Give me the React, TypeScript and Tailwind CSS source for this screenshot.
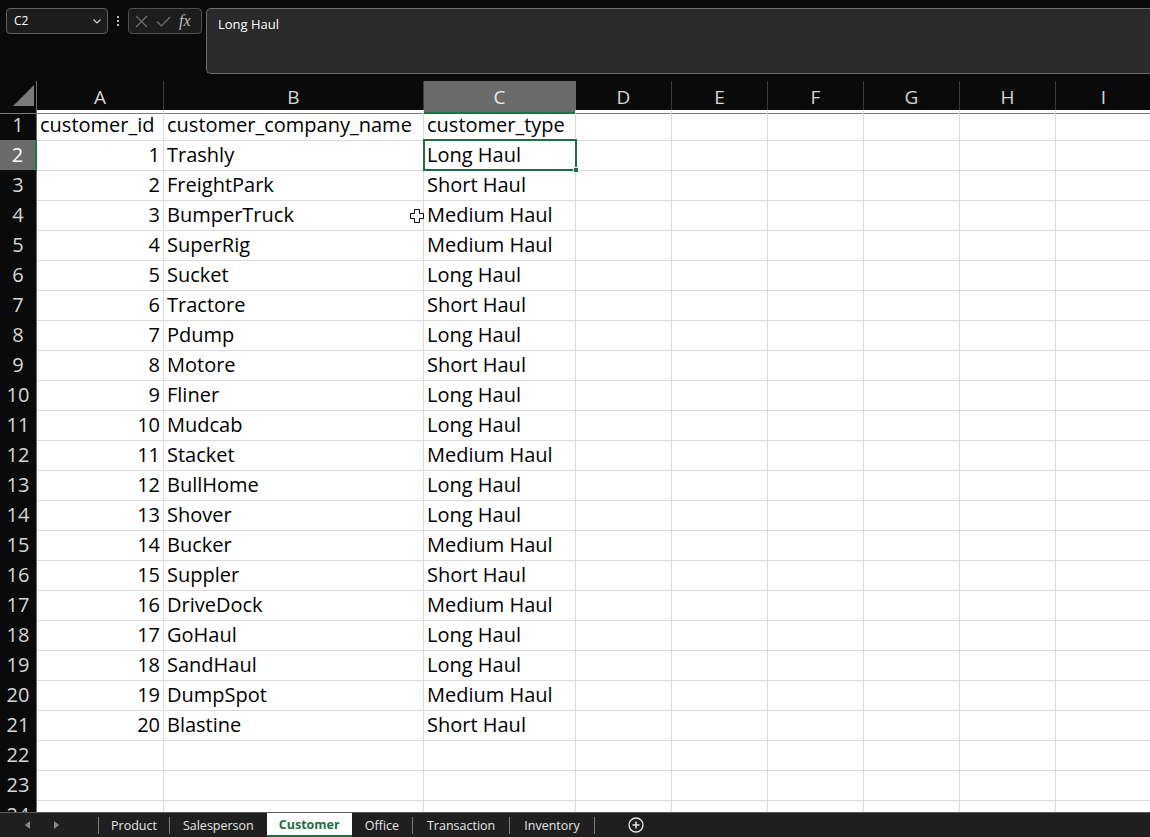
import React from "react";

const rows: [string, string, string][] = [
  ["customer_id", "customer_company_name", "customer_type"],
  ["1", "Trashly", "Long Haul"],
  ["2", "FreightPark", "Short Haul"],
  ["3", "BumperTruck", "Medium Haul"],
  ["4", "SuperRig", "Medium Haul"],
  ["5", "Sucket", "Long Haul"],
  ["6", "Tractore", "Short Haul"],
  ["7", "Pdump", "Long Haul"],
  ["8", "Motore", "Short Haul"],
  ["9", "Fliner", "Long Haul"],
  ["10", "Mudcab", "Long Haul"],
  ["11", "Stacket", "Medium Haul"],
  ["12", "BullHome", "Long Haul"],
  ["13", "Shover", "Long Haul"],
  ["14", "Bucker", "Medium Haul"],
  ["15", "Suppler", "Short Haul"],
  ["16", "DriveDock", "Medium Haul"],
  ["17", "GoHaul", "Long Haul"],
  ["18", "SandHaul", "Long Haul"],
  ["19", "DumpSpot", "Medium Haul"],
  ["20", "Blastine", "Short Haul"],
  ["", "", ""],
  ["", "", ""],
  ["", "", ""],
];

const cols = ["A", "B", "C", "D", "E", "F", "G", "H", "I"];
const gridCols = "grid grid-cols-[37px_127px_260px_152px_96px_96px_96px_96px_96px_96px]";

export default function App() {
  return (
    <div className="w-[1150px] h-[837px] overflow-hidden bg-[#0a0a0a] flex flex-col" style={{ fontFamily: '"Open Sans", sans-serif' }}>
      {/* top formula area */}
      <div className="h-[81px] shrink-0 flex items-start pt-[8px] pl-[6px]">
        <div className="w-[102px] h-[26px] rounded-[4px] border border-[#5e5e5e] bg-[#1c1c1c] flex items-center justify-between pl-[7px] pr-[4px]">
          <span className="text-[12px] text-white">C2</span>
          <svg width="12" height="12" viewBox="0 0 12 12"><path d="M2.5 4.5 L6 8 L9.5 4.5" stroke="#d0d0d0" strokeWidth="1.2" fill="none" /></svg>
        </div>
        <div className="w-[20px] h-[26px] flex flex-col items-center justify-center gap-[2px]">
          <div className="w-[2px] h-[2px] bg-[#bdbdbd]" />
          <div className="w-[2px] h-[2px] bg-[#bdbdbd]" />
          <div className="w-[2px] h-[2px] bg-[#bdbdbd]" />
        </div>
        <div className="w-[74px] h-[26px] rounded-[4px] border border-[#4e4e4e] bg-[#1c1c1c] flex items-center pl-[6px] gap-[8px]">
          <svg width="13" height="13" viewBox="0 0 13 13"><path d="M1 1 L12 12 M12 1 L1 12" stroke="#6e6e6e" strokeWidth="1.2" /></svg>
          <svg width="15" height="13" viewBox="0 0 15 13"><path d="M1 6.5 L5.5 11 L14 2" stroke="#6e6e6e" strokeWidth="1.2" fill="none" /></svg>
          <span className="text-[16px] italic text-[#bdbdbd] leading-none" style={{ fontFamily: '"Liberation Serif", serif' }}>fx</span>
        </div>
        <div className="ml-[4px] flex-1 h-[66px] rounded-l-[5px] border border-r-0 border-[#6a6a6a] bg-[#2a2a2a] pl-[11px] pt-[2px]">
          <span className="text-[13px] text-white leading-[18px]">Long Haul</span>
        </div>
      </div>

      {/* grid */}
      <div className="relative h-[731px] overflow-hidden bg-white">
        {/* header row */}
        <div className={`${gridCols} h-[29px] bg-[#0a0a0a]`}>
          <div className="relative border-r border-[#6a6a6a] border-b border-b-[#7a7a7a]">
            <svg className="absolute left-[13px] top-[4px]" width="22" height="22" viewBox="0 0 22 22"><polygon points="21,0 21,21 0,21" fill="#7a7a7a" /></svg>
          </div>
          {cols.map((c) => (
            <div
              key={c}
              className={
                c === "C"
                  ? "bg-[#6b6b6b] border-r border-[#6a6a6a] border-b-2 border-b-[#217346] flex items-center justify-center text-[19px] text-[#e8e8e8] pt-[2px]"
                  : "border-r border-[#3a3a3a] border-b border-b-[#7a7a7a] flex items-center justify-center text-[19px] text-[#d6d6d6]"
              }
            >
              {c}
            </div>
          ))}
          <div className="border-b border-b-[#7a7a7a]" />
        </div>

        {rows.map((r, i) => {
          const n = i + 1;
          const sel = n === 2;
          return (
            <div key={n} className={`${gridCols} h-[30px]`}>
              <div
                className={
                  sel
                    ? "bg-[#6b6b6b] border-r-2 border-[#217346] border-b border-b-[#2a2a2a] flex items-center justify-center text-[20px] text-white"
                    : "bg-[#0a0a0a] border-r border-[#6a6a6a] border-b border-b-[#2a2a2a] flex items-center justify-center text-[20px] text-[#d6d6d6]"
                }
              >
                {n}
              </div>
              <div className={`border-r border-b border-[#dadada] flex items-end pb-[3px] text-[20px] text-black leading-[24px] ${n === 1 ? "justify-start pl-[3px]" : "justify-end pr-[3px]"}`}>
                {r[0]}
              </div>
              <div className="border-r border-b border-[#dadada] flex items-end pb-[3px] pl-[3px] text-[20px] text-black leading-[24px] whitespace-nowrap">
                {r[1]}
              </div>
              <div className="border-r border-b border-[#dadada] flex items-end pb-[3px] pl-[3px] text-[20px] text-black leading-[24px] whitespace-nowrap">
                {r[2]}
              </div>
              {[0, 1, 2, 3, 4, 5].map((k) => (
                <div key={k} className="border-r border-b border-[#dadada]" />
              ))}
            </div>
          );
        })}

        {/* selection box C2 */}
        <div className="absolute left-[423px] top-[58px] w-[154px] h-[32px] border-2 border-[#1e6e42] pointer-events-none" />
        <div className="absolute left-[573px] top-[86px] w-[6px] h-[6px] bg-[#1e6e42] border border-white" />

        {/* cell cursor */}
        <svg className="absolute left-[410px] top-[128px]" width="14" height="14" viewBox="0 0 14 14">
          <path d="M4.5 0.5 H9.5 V4.5 H13.5 V9.5 H9.5 V13.5 H4.5 V9.5 H0.5 V4.5 H4.5 Z" fill="white" stroke="black" strokeWidth="1" />
        </svg>
      </div>

      {/* sheet tabs */}
      <div className="h-[25px] shrink-0 bg-[#1f1f1f] border-t border-[#5a5a5a] flex items-center text-[12.5px] text-[#e6e6e6] leading-[16px]" style={{ fontFamily: '"Open Sans", sans-serif' }}>
        <div className="w-[98px] h-full flex items-center">
          <svg className="ml-[25px]" width="6" height="8" viewBox="0 0 6 8"><polygon points="5,0 5,8 0,4" fill="#8a8a8a" /></svg>
          <svg className="ml-[22px]" width="6" height="8" viewBox="0 0 6 8"><polygon points="1,0 1,8 6,4" fill="#8a8a8a" /></svg>
        </div>
        <div className="w-px h-[17px] bg-[#7a7a7a]" />
        <div className="px-[12px] pt-[1px]">Product</div>
        <div className="w-px h-[17px] bg-[#7a7a7a]" />
        <div className="pl-[13px] pr-[13px] pt-[1px]">Salesperson</div>
        <div className="h-full bg-white px-[12px] pt-[1px] flex items-center font-bold text-[#1e6e42] border-b-2 border-[#1e6e42]">Customer</div>
        <div className="px-[13px] pt-[1px]">Office</div>
        <div className="w-px h-[17px] bg-[#7a7a7a]" />
        <div className="px-[14px] pt-[1px]">Transaction</div>
        <div className="w-px h-[17px] bg-[#7a7a7a]" />
        <div className="px-[14px] pt-[1px]">Inventory</div>
        <div className="w-px h-[17px] bg-[#7a7a7a]" />
        <svg className="ml-[33px]" width="16" height="16" viewBox="0 0 16 16">
          <circle cx="8" cy="8" r="7" stroke="#e6e6e6" strokeWidth="1.3" fill="none" />
          <path d="M8 4.5 V11.5 M4.5 8 H11.5" stroke="#e6e6e6" strokeWidth="1.5" />
        </svg>
      </div>
    </div>
  );
}
